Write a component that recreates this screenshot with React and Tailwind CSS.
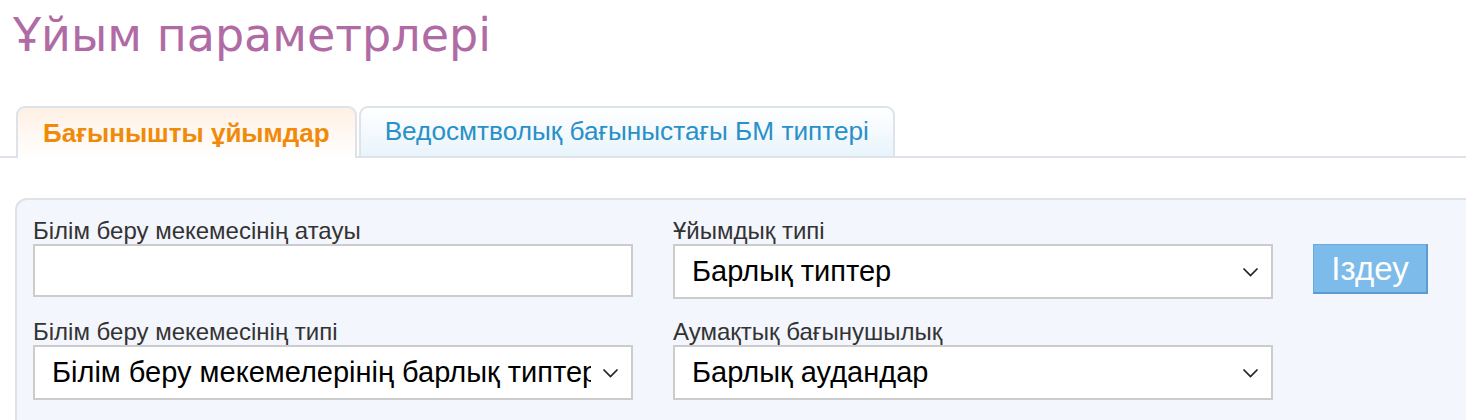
import React from "react";

function Chevron() {
  return (
    <svg
      className="pointer-events-none absolute right-[14px] top-1/2 -translate-y-1/2"
      width="17"
      height="10"
      viewBox="0 0 17 10"
      fill="none"
    >
      <path d="M1.5 1.5 L8.5 8.5 L15.5 1.5" stroke="#222" strokeWidth="1.7" />
    </svg>
  );
}

function Select({ value, options }) {
  return (
    <div className="relative w-[600px]">
      <select
        defaultValue={value}
        className="block h-[55px] w-full appearance-none border-2 border-[#cccccc] bg-white pl-[17px] pr-[40px] text-[29px] text-black outline-none"
        style={{ fontFamily: "'Liberation Sans', Arial, sans-serif" }}
      >
        {options.map((o) => (
          <option key={o}>{o}</option>
        ))}
      </select>
      <Chevron />
    </div>
  );
}

export default function App() {
  return (
    <div
      className="h-[420px] w-full overflow-hidden bg-white"
      style={{ fontFamily: "'Liberation Sans', Arial, sans-serif" }}
    >
      <h1
        className="pl-[13px] pt-[5px] text-[46px] leading-[61px] text-[#b06ba5]"
        style={{ fontFamily: "'DejaVu Sans', Verdana, sans-serif" }}
      >
        Ұйым параметрлері
      </h1>

      <div className="mt-[40px] flex items-end border-b-2 border-[#dde3e8] pl-[16px]">
        <div className="-mb-[2px] flex h-[52px] items-center rounded-t-[9px] border-2 border-b-0 border-[#dde3e8] bg-gradient-to-b from-[#fff0e4] to-white px-[25px] text-[26px] font-bold text-[#f08a0a]">
          Бағынышты ұйымдар
        </div>
        <div className="ml-[2px] flex h-[50px] items-center rounded-t-[9px] border-2 border-b-0 border-[#dde3e8] bg-gradient-to-b from-white to-[#e8f4fb] px-[24px] text-[26.2px] text-[#2a90c8]">
          Ведосмтволық бағыныстағы БМ типтері
        </div>
      </div>

      <div className="ml-[15px] mt-[40px] h-[300px] rounded-tl-[12px] border-l-2 border-t-2 border-[#dde3e8] bg-[#f3f6fd] pl-[16px] pt-[18px]">
        <div className="flex gap-x-[40px]">
          <div className="flex flex-col gap-y-[22px]">
            <div>
              <div className="text-[24px] leading-[26px] text-[#333]">Білім беру мекемесінің атауы</div>
              <input
                type="text"
                className="block h-[53px] w-[600px] border-2 border-[#cccccc] bg-white px-[12px] text-[24px] outline-none"
              />
            </div>
            <div>
              <div className="text-[24px] leading-[26px] text-[#333]">Білім беру мекемесінің типі</div>
              <Select
                value="Білім беру мекемелерінің барлық типтері"
                options={["Білім беру мекемелерінің барлық типтері"]}
              />
            </div>
          </div>
          <div className="flex flex-col gap-y-[20px]">
            <div>
              <div className="text-[24px] leading-[26px] text-[#333]">Ұйымдық типі</div>
              <Select value="Барлық типтер" options={["Барлық типтер"]} />
            </div>
            <div>
              <div className="text-[24px] leading-[26px] text-[#333]">Аумақтық бағынушылық</div>
              <Select value="Барлық аудандар" options={["Барлық аудандар"]} />
            </div>
          </div>
          <div className="pt-[26px]">
            <button className="h-[50px] w-[115px] border border-b-2 border-r-2 border-[#6aa9dd] border-b-[#5b9bd2] border-r-[#5b9bd2] bg-[#7cbbea] text-[33px] leading-none text-white">
              Іздеу
            </button>
          </div>
        </div>
      </div>
    </div>
  );
}
